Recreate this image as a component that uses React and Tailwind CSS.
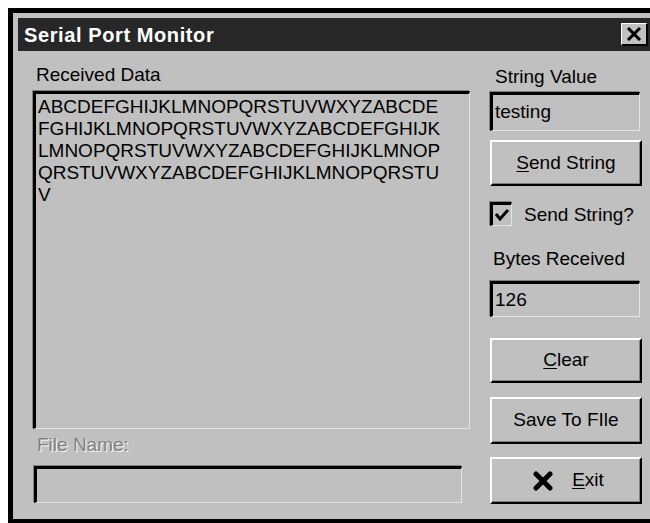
import React from "react";

const LINES = [
  "ABCDEFGHIJKLMNOPQRSTUVWXYZABCDE",
  "FGHIJKLMNOPQRSTUVWXYZABCDEFGHIJK",
  "LMNOPQRSTUVWXYZABCDEFGHIJKLMNOP",
  "QRSTUVWXYZABCDEFGHIJKLMNOPQRSTU",
  "V",
];

// Win95-style sunken field
function Sunken({ className = "", children }) {
  return (
    <div
      className={
        "border-t-[3px] border-l-[3px] border-t-black border-l-black border-b border-r border-b-[#e4e4e4] border-r-[#e4e4e4] shadow-[-1px_-1px_0_0_#808080] " +
        className
      }
    >
      {children}
    </div>
  );
}

// Win95-style raised push button
function Button({ className = "", children }) {
  return (
    <div
      className={
        "w-[152px] flex items-center justify-center border-t-2 border-l-2 border-t-white border-l-white border-b-2 border-r-2 border-b-black border-r-black shadow-[inset_-1px_-1px_0_0_#808080] " +
        className
      }
    >
      {children}
    </div>
  );
}

function CloseButton() {
  return (
    <div className="w-[27px] h-[23px] bg-[#c0c0c0] flex items-center justify-center border-t border-l border-t-white border-l-white border-b-2 border-r-2 border-b-black border-r-black">
      <svg width="16" height="14" viewBox="0 0 16 14">
        <path d="M2 1 L14 13 M14 1 L2 13" stroke="#000" strokeWidth="3" />
      </svg>
    </div>
  );
}

export default function App() {
  return (
    <div className="w-[650px] h-[523px] bg-white overflow-hidden pl-2 pt-2 font-['Liberation_Sans',Arial,sans-serif] text-[19px] text-black">
      <div className="w-[654px] h-[515px] bg-[#c0c0c0] border-l-[5px] border-t-[5px] border-b-[4px] border-black pl-[5px] pt-[5px] flex flex-col">
        {/* title bar */}
        <div className="w-[634px] h-[33px] bg-[#272727] flex items-center justify-between pl-[6px] pr-[4px]">
          <span className="text-white font-bold text-[20px] tracking-[0.6px] leading-none">
            Serial Port Monitor
          </span>
          <CloseButton />
        </div>

        <div className="flex pl-[15px]">
          {/* left column */}
          <div className="w-[437px] flex flex-col">
            <div className="mt-[13px] h-[22px] leading-[22px] pl-[3px]">Received Data</div>
            <Sunken className="mt-[5px] h-[338px] pl-[2px] pt-[2px] leading-[22px]">
              {LINES.map((l, i) => (
                <div key={i} className="whitespace-nowrap">
                  {l}
                </div>
              ))}
            </Sunken>
            <div className="mt-[5px] h-[22px] leading-[22px] pl-[4px] text-[#808080] [text-shadow:1px_1px_0_#ffffff]">
              File Name:
            </div>
            <Sunken className="mt-[10px] ml-[1px] w-[428px] h-[37px]" />
          </div>

          {/* right column */}
          <div className="ml-[20px] w-[152px] flex flex-col">
            <div className="mt-[15px] h-[22px] leading-[22px] pl-[5px]">String Value</div>
            <Sunken className="mt-[4px] w-[150px] h-[39px] flex items-center pl-[2px]">
              testing
            </Sunken>
            <Button className="mt-[9px] h-[46px]">
              <span>
                <u className="underline-offset-2">S</u>end String
              </span>
            </Button>
            <div className="mt-[16px] h-[24px] flex items-center">
              <Sunken className="w-[22px] h-[24px] flex items-center justify-center">
                <svg width="16" height="14" viewBox="0 0 16 14">
                  <path d="M2 6 L6 11 L14 2" stroke="#000" strokeWidth="3" fill="none" />
                </svg>
              </Sunken>
              <span className="ml-[12px] leading-none">Send String?</span>
            </div>
            <div className="mt-[22px] h-[22px] leading-[22px] pl-[3px]">Bytes Received</div>
            <Sunken className="mt-[11px] w-[150px] h-[36px] flex items-center pl-[2px]">
              126
            </Sunken>
            <Button className="mt-[21px] h-[45px]">
              <span>
                <u className="underline-offset-2">C</u>lear
              </span>
            </Button>
            <Button className="mt-[14px] h-[47px]">Save To FIle</Button>
            <Button className="mt-[13px] h-[47px]">
              <svg width="22" height="20" viewBox="0 0 22 20" className="mr-[18px] ml-[4px]">
                <path d="M4 3 L18 17 M18 3 L4 17" stroke="#000" strokeWidth="5" strokeLinecap="round" />
              </svg>
              <span>
                <u className="underline-offset-2">E</u>xit
              </span>
            </Button>
          </div>
        </div>
      </div>
    </div>
  );
}
